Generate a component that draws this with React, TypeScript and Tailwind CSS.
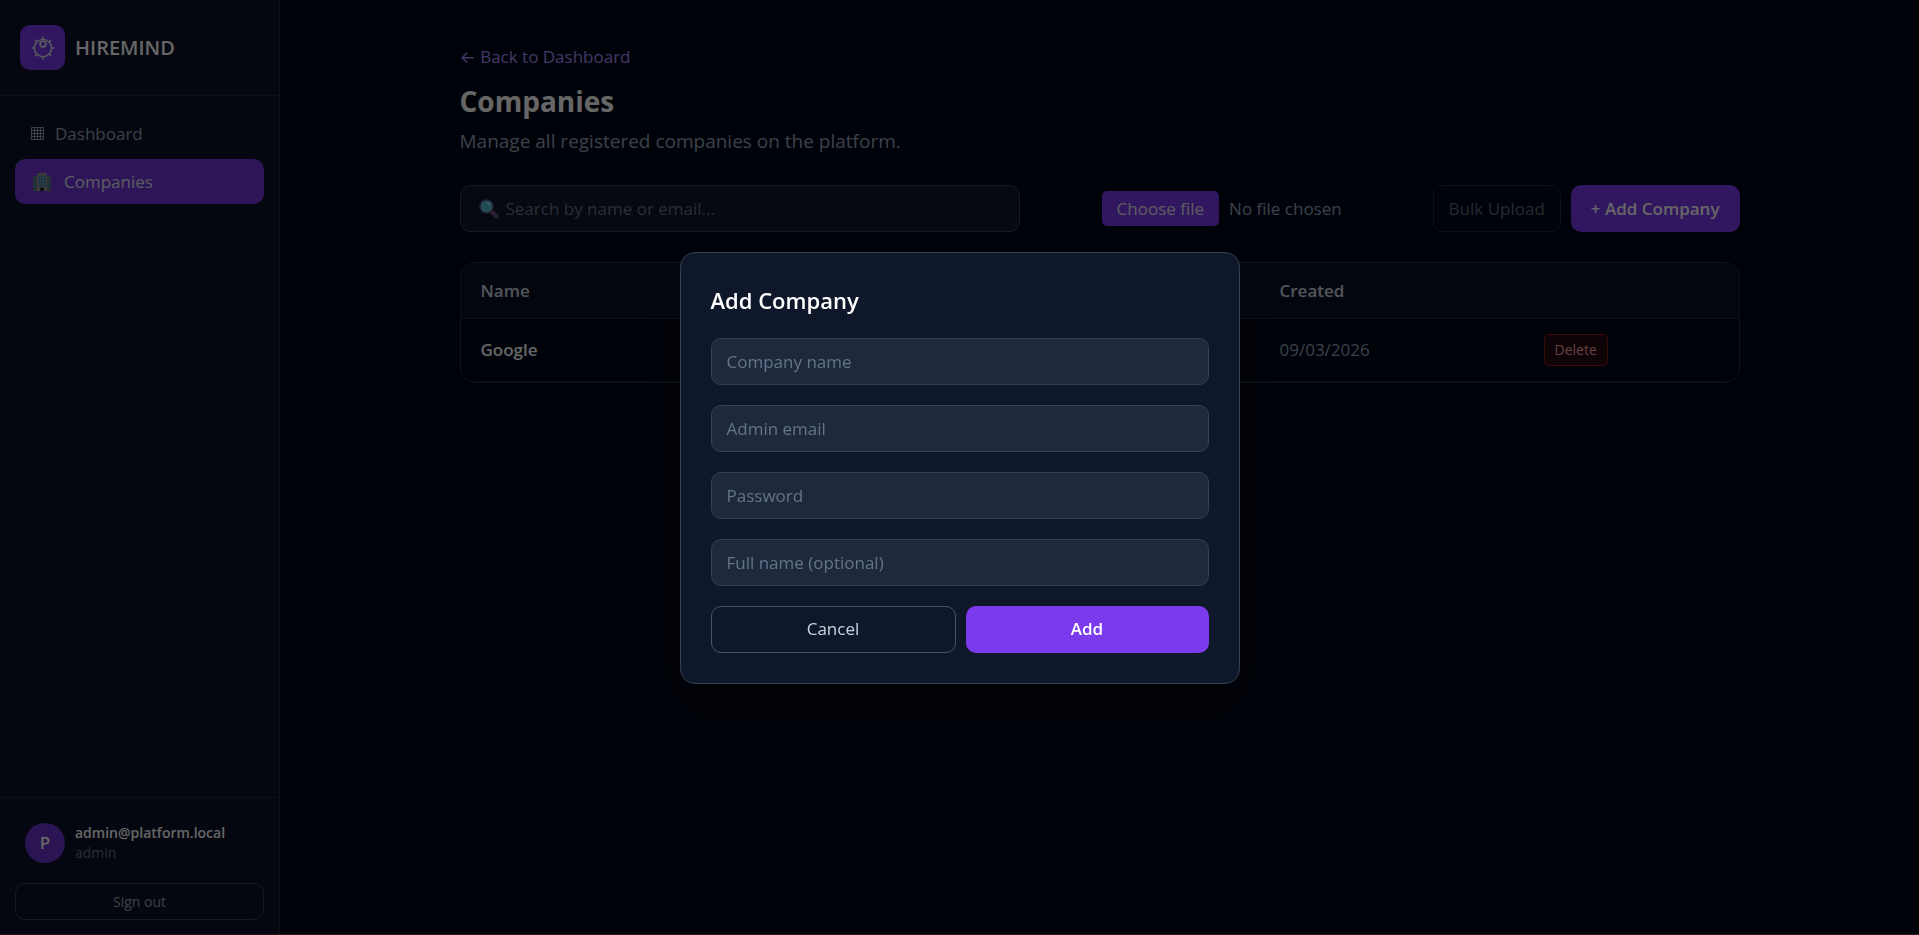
import React, { useState } from 'react';

interface Company {
  name: string;
  created: string;
}

interface FieldProps {
  id: string;
  label: string;
  type?: string;
}

const companies: Company[] = [{ name: 'Google', created: '09/03/2026' }];

const LogoIcon = () => (
  <svg viewBox="0 0 24 24" className="h-6 w-6" fill="none" stroke="currentColor" aria-hidden="true">
    <circle cx="12" cy="12" r="8.6" strokeWidth="1.4" />
    <circle cx="12" cy="8" r="2.9" strokeWidth="1.6" />
    <path
      strokeWidth="1.5"
      d="M12 .6v3M12 20.4v3M.6 12h3M20.4 12h3M4 4l2 2M18 18l2 2M20 4l-2 2M6 18l-2 2"
    />
  </svg>
);

const GridIcon = () => (
  <svg viewBox="0 0 13 13" className="h-[13px] w-[13px]" fill="none" stroke="currentColor" aria-hidden="true">
    <path d="M.5 .5h12v12H.5zM3.5 .5v12M6.5 .5v12M9.5 .5v12M.5 3.5h12M.5 6.5h12M.5 9.5h12" />
  </svg>
);

const BuildingIcon = () => (
  <svg viewBox="0 0 18 18" className="h-[18px] w-[18px]" aria-hidden="true">
    <path d="M0 3h4v15H0zM14 3h4v15h-4z" fill="#74767e" />
    <path d="M4 1l1-1h8l1 1v17H4z" fill="#98969c" />
    <path
      d="M5.5 2.5h2v2h-2zM8.2 2.5h2v2h-2zM11 2.5h2v2h-2zM5.5 5.5h2v2h-2zM8.2 5.5h2v2h-2zM11 5.5h2v2h-2zM5.5 8.5h2v2h-2zM8.2 8.5h2v2h-2zM11 8.5h2v2h-2zM5.5 11.5h2v2h-2zM8.2 11.5h2v2h-2zM11 11.5h2v2h-2zM1 5h2v1.500H1zM1 8h2v1.500H1zM1 11h2v1.500H1zM1 14h2v1.500H1zM15 5h2v1.500h-2zM15 8h2v1.500h-2zM15 11h2v1.500h-2zM15 14h2v1.500h-2z"
      fill="#2484b0"
    />
    <path d="M7 14.500h4V18H7z" fill="#2b2320" />
  </svg>
);

const SearchIcon = () => (
  <svg viewBox="0 0 20 20" className="h-5 w-5 shrink-0" aria-hidden="true">
    <path d="M13 13l4.500 4.500" stroke="#7a4a82" strokeWidth="4" strokeLinecap="round" />
    <circle cx="7.500" cy="7.500" r="6.600" fill="#55bfd6" stroke="#54497a" strokeWidth="1.400" />
    <circle cx="9.500" cy="5" r="1.300" fill="#9be4f0" />
  </svg>
);

const Field: React.FC<FieldProps> = ({ id, label, type = 'text' }) => (
  <input
    id={id}
    type={type}
    aria-label={label}
    placeholder={label}
    className="h-[47px] w-full rounded-[10px] border border-[#334155] bg-[#1e293b] px-[15px] text-[17px] text-white outline-none placeholder:text-[#64748b]"
  />
);

const Sidebar = () => (
  <aside className="flex w-[280px] shrink-0 flex-col border-r border-[#1e293b] bg-[#0f172a]/80">
    <div className="flex items-center gap-[10px] border-b border-[#1e293b] px-5 py-[25px]">
      <div className="flex h-[45px] w-[45px] items-center justify-center rounded-[10px] bg-[#7c3aed] text-slate-200">
        <LogoIcon />
      </div>
      <span className="text-[20px] font-semibold">HIREMIND</span>
    </div>

    <nav className="flex flex-1 flex-col gap-[3px] px-[15px] py-[15px] text-[17px]">
      <a href="#dashboard" className="flex h-[45px] items-center gap-[11px] rounded-[10px] px-4 text-[#94a3b8]">
        <GridIcon />
        Dashboard
      </a>
      <a href="#companies" className="flex h-[45px] items-center gap-[13px] rounded-[10px] bg-[#7c3aed]/90 px-[18px] text-slate-200">
        <BuildingIcon />
        Companies
      </a>
    </nav>

    <div className="border-t border-[#1e293b] px-[15px] pt-[25px] pb-[15px]">
      <div className="mb-5 flex items-center gap-[10px] px-[10px]">
        <div className="flex h-10 w-10 items-center justify-center rounded-full bg-[#7c3aed]/85 text-[17px] font-semibold">P</div>
        <div className="leading-5">
          <p className="text-[14px] font-semibold">admin@platform.local</p>
          <p className="text-[14px] text-[#64748b]">admin</p>
        </div>
      </div>
      <button type="button" className="h-[37px] w-full rounded-[10px] border border-[#334155] text-[14px] text-[#94a3b8]">
        Sign out
      </button>
    </div>
  </aside>
);

const CompaniesTable = () => (
  <div className="mt-[30px] overflow-hidden rounded-[15px] border border-[#1e293b]">
    <table className="w-full table-fixed text-left text-[17px]">
      <colgroup>
        <col />
        <col />
        <col className="w-[264px]" />
        <col className="w-[215px]" />
      </colgroup>
      <thead>
        <tr className="h-[55px] border-b border-[#1e293b] bg-[#0f172a]/70 text-[#cbd5e1]">
          <th className="px-5 font-semibold">Name</th>
          <td />
          <th className="px-5 font-semibold">Created</th>
          <td />
        </tr>
      </thead>
      <tbody>
        {companies.map((c) => (
          <tr key={c.name} className="h-[63px] border-b border-[#1e293b]">
            <td className="px-5 font-semibold">{c.name}</td>
            <td />
            <td className="px-5 text-[#94a3b8]">{c.created}</td>
            <td className="px-5">
              <button
                type="button"
                className="block h-8 rounded-[5px] border border-[#991b1b] bg-[#450a0a]/50 px-[10px] text-[14px] text-[#fca5a5]"
              >
                Delete
              </button>
            </td>
          </tr>
        ))}
      </tbody>
    </table>
  </div>
);

const AddCompanyModal = ({ onClose }: { onClose: () => void }) => (
  <div className="fixed inset-0 flex items-center justify-center bg-black/60 shadow-[inset_0_-1px_#2a1520]">
    <form
      role="dialog"
      aria-labelledby="modal-title"
      onSubmit={(e) => e.preventDefault()}
      className="flex w-full max-w-[560px] flex-col gap-5 rounded-[15px] border border-[#334155] bg-[#0f172a] p-[30px] shadow-2xl"
    >
      <h2 id="modal-title" className="text-[22px] leading-[35px] font-semibold">Add Company</h2>
      <Field id="company-name" label="Company name" />
      <Field id="admin-email" label="Admin email" type="email" />
      <Field id="password" label="Password" type="password" />
      <Field id="full-name" label="Full name (optional)" />
      <div className="flex gap-[10px]">
        <button
          type="button"
          onClick={onClose}
          className="h-[47px] flex-1 rounded-[10px] border border-[#475569] px-5 text-[17px] text-[#cbd5e1]"
        >
          Cancel
        </button>
        <button type="submit" className="h-[47px] flex-1 rounded-[10px] bg-[#7c3aed] px-5 text-[17px] font-semibold text-white">
          Add
        </button>
      </div>
    </form>
  </div>
);

export default function App() {
  const [open, setOpen] = useState(true);
  const [fileName, setFileName] = useState('No file chosen');

  return (
    <div className="flex min-h-screen bg-[#020617] font-['Open_Sans','Noto_Sans',sans-serif] text-white">
      <Sidebar />
      <main className="flex-1 px-10 py-10">
        <div className="mx-auto max-w-[1280px]">
          <a href="#dashboard" className="block text-[17px] leading-[34px] text-[#a78bfa]">
            <span className="font-['Inter']">←</span> Back to Dashboard
          </a>
          <h1 className="mt-[6px] text-[28px] leading-[42px] font-bold">Companies</h1>
          <p className="mt-1 text-[19px] leading-[30px] text-[#94a3b8]">Manage all registered companies on the platform.</p>

          <div className="mt-[29px] flex items-center justify-between">
            <label className="flex h-[47px] w-full max-w-[560px] items-center gap-[7px] rounded-[10px] border border-[#334155] bg-[#0f172a] px-[18px]">
              <SearchIcon />
              <input
                type="search"
                aria-label="Search companies"
                placeholder="Search by name or email..."
                className="w-full bg-transparent text-[17px] outline-none placeholder:text-[#64748b]"
              />
            </label>
            <div className="flex items-center gap-[10px]">
              <input
                id="bulk-file"
                type="file"
                className="sr-only"
                onChange={(e) => setFileName(e.target.files?.[0]?.name ?? 'No file chosen')}
              />
              <label htmlFor="bulk-file" className="flex w-[321px] items-center gap-[10px] text-[17px] text-[#94a3b8]">
                <span className="flex h-[35px] items-center rounded-[5px] bg-[#7c3aed] px-[15px] text-slate-200">Choose file</span>
                {fileName}
              </label>
              <button type="button" disabled className="h-[47px] rounded-[10px] border border-[#1e293b] px-[15px] text-[17px] text-[#5f6678]">
                Bulk Upload
              </button>
              <button
                type="button"
                onClick={() => setOpen(true)}
                className="h-[47px] rounded-[10px] bg-[#7c3aed] px-5 text-[17px] font-semibold text-white"
              >
                + Add Company
              </button>
            </div>
          </div>

          <CompaniesTable />
        </div>
      </main>
      {open && <AddCompanyModal onClose={() => setOpen(false)} />}
    </div>
  );
}
